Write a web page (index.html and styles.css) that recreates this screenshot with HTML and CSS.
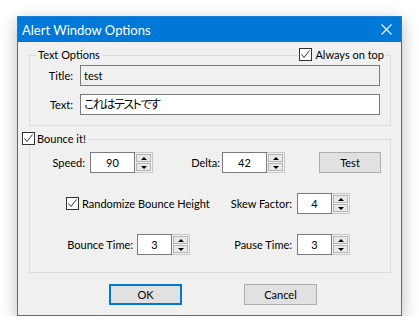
FILE: index.html
```html
<!DOCTYPE html>
<html lang="en">

<head>
  <meta charset="UTF-8">
  <meta name="viewport" content="width=device-width, initial-scale=1.0">
  <title>Alert Window Options</title>

  <link rel="stylesheet" href="styles.css">

</head>

<body>

  <div class="window">
    <div class="titlebar">
      <span class="title">Alert Window Options</span>
      <svg class="close" width="11" height="11" viewBox="0 0 11 11">
        <path d="M0.5 0.5 L10.5 10.5 M10.5 0.5 L0.5 10.5" stroke="#fff" stroke-width="1.1" fill="none" />
      </svg>
    </div>

    <div class="content">

      <!-- text options -->
      <div class="group text-group">
        <div class="group-head">
          <span class="legend">Text Options</span>
          <span class="check legend">
            <svg class="box" width="13" height="13" viewBox="0 0 13 13">
              <rect x="0.5" y="0.5" width="12" height="12" fill="#fff" stroke="#333" />
              <polyline points="2.5,6.5 5,9.5 10.5,2.5" fill="none" stroke="#333" stroke-width="1" />
            </svg>
            Always on top
          </span>
        </div>
        <div class="field-row">
          <span class="field-label">Title:</span>
          <div class="textbox readonly">test</div>
        </div>
        <div class="field-row">
          <span class="field-label">Text:</span>
          <div class="textbox jp">これはテストです</div>
        </div>
      </div>

      <!-- bounce -->
      <div class="group bounce-group">
        <div class="group-head">
          <span class="check legend bounce-check">
            <svg class="box" width="13" height="13" viewBox="0 0 13 13">
              <rect x="0.5" y="0.5" width="12" height="12" fill="#fff" stroke="#333" />
              <polyline points="2.5,6.5 5,9.5 10.5,2.5" fill="none" stroke="#333" stroke-width="1" />
            </svg>
            Bounce it!
          </span>
        </div>

        <div class="row">
          <span class="lbl lbl-speed">Speed:</span>
          <div class="spin wide">
            <div class="spin-value">90</div>
            <div class="spin-btns"><span class="up"></span><span class="down"></span></div>
          </div>
          <span class="lbl lbl-delta">Delta:</span>
          <div class="spin wide">
            <div class="spin-value">42</div>
            <div class="spin-btns"><span class="up"></span><span class="down"></span></div>
          </div>
          <button class="btn test-btn">Test</button>
        </div>

        <div class="row">
          <span class="check random-check">
            <svg class="box" width="13" height="13" viewBox="0 0 13 13">
              <rect x="0.5" y="0.5" width="12" height="12" fill="#fff" stroke="#333" />
              <polyline points="2.5,6.5 5,9.5 10.5,2.5" fill="none" stroke="#333" stroke-width="1" />
            </svg>
            Randomize Bounce Height
          </span>
          <span class="lbl lbl-skew">Skew Factor:</span>
          <div class="spin">
            <div class="spin-value">4</div>
            <div class="spin-btns"><span class="up"></span><span class="down"></span></div>
          </div>
        </div>

        <div class="row">
          <span class="lbl lbl-btime">Bounce Time:</span>
          <div class="spin">
            <div class="spin-value">3</div>
            <div class="spin-btns"><span class="up"></span><span class="down"></span></div>
          </div>
          <span class="lbl lbl-ptime">Pause Time:</span>
          <div class="spin">
            <div class="spin-value">3</div>
            <div class="spin-btns"><span class="up"></span><span class="down"></span></div>
          </div>
        </div>
      </div>

      <div class="buttons">
        <button class="btn default">OK</button>
        <button class="btn">Cancel</button>
      </div>

    </div>
  </div>

</body>

</html>
```

FILE: styles.css
```css
body {
  margin: 0;
  background-color: #fff;
  font-family: Lato, "Noto Sans CJK JP", sans-serif;
  font-size: 11px;
  color: #000;
}

/* window */
.window {
  box-sizing: border-box;
  margin: 16px 0 0 17px;
  width: 385px;
  height: 300px;
  border: 1px solid #1a7fd4;
  background-color: #f0f0f0;
  box-shadow: 0 5px 16px rgba(0, 0, 0, 0.28);
  display: flex;
  flex-direction: column;
}

.titlebar {
  height: 25px;
  background-color: #0078d7;
  display: flex;
  align-items: center;
  justify-content: space-between;
  padding: 0 9px 0 4px;
}

.title {
  color: #fff;
  font-size: 13px;
}

.content {
  padding: 0 10px 0 11px;
}

/* group boxes */
.group {
  border: 1px solid #dcdcdc;
}

.group-head {
  display: flex;
  justify-content: space-between;
  align-items: center;
  height: 15px;
  margin-top: -9px;
}

.legend {
  background-color: #f0f0f0;
  padding: 0 2px;
  line-height: 15px;
}

.text-group {
  margin-top: 13px;
  padding-bottom: 10px;
}

.text-group .group-head {
  margin-bottom: 3px;
  padding-left: 6px;
  padding-right: 4px;
}

.check {
  display: flex;
  align-items: center;
  gap: 3px;
  white-space: nowrap;
}

.field-row {
  display: flex;
  align-items: center;
  height: 21px;
  margin-bottom: 8px;
}

.field-row:last-child {
  margin-bottom: 0;
}

.field-label {
  width: 43px;
  margin-right: 7px;
  text-align: right;
}

.textbox {
  box-sizing: border-box;
  flex: 1;
  height: 21px;
  margin-right: 10px;
  padding-left: 3px;
  border: 1px solid #7a7a7a;
  background-color: #fff;
  line-height: 19px;
}

.textbox.readonly {
  background-color: #f0f0f0;
}

.jp {
  font-size: 12px;
  font-feature-settings: "palt";
  letter-spacing: -1.5px;
}

.bounce-group {
  margin-top: 13px;
  padding-bottom: 17px;
}

.bounce-check {
  margin-left: -8px;
  padding-left: 0;
  gap: 2px;
}

/* rows */
.row {
  display: flex;
  align-items: center;
  height: 21px;
  margin-top: 20px;
}

.bounce-group .group-head + .row {
  margin-top: 6px;
}

.lbl {
  flex-shrink: 0;
  text-align: right;
  white-space: nowrap;
}

.lbl-speed {
  width: 55px;
  margin-right: 5px;
}

.lbl-delta {
  width: 67px;
  margin-right: 2px;
}

.random-check {
  flex-shrink: 0;
  width: 150px;
  margin-left: 36px;
}

.lbl-skew {
  width: 76px;
  margin-right: 5px;
}

.lbl-btime {
  width: 103px;
  margin-right: 4px;
}

.lbl-ptime {
  width: 102px;
  margin-right: 5px;
}

/* spin boxes */
.spin {
  display: flex;
  flex-shrink: 0;
  height: 21px;
}

.spin-value {
  box-sizing: border-box;
  width: 35px;
  height: 21px;
  border: 1px solid #7a7a7a;
  background-color: #fff;
  text-align: center;
  line-height: 19px;
}

.spin.wide .spin-value {
  width: 45px;
}

.spin-btns {
  box-sizing: border-box;
  width: 18px;
  height: 21px;
  border: 1px solid #c8c8c8;
  border-left: none;
  padding: 1px;
  display: flex;
  flex-direction: column;
  gap: 1px;
}

.spin-btns span {
  flex: 1;
  border: 1px solid #b4b4b4;
  background-color: #e8e8e8;
  display: flex;
  align-items: center;
  justify-content: center;
}

.spin-btns .up::before {
  content: "";
  border-left: 3px solid transparent;
  border-right: 3px solid transparent;
  border-bottom: 3px solid #000;
}

.spin-btns .down::before {
  content: "";
  border-left: 3px solid transparent;
  border-right: 3px solid transparent;
  border-top: 3px solid #000;
}

/* buttons */
.btn {
  box-sizing: border-box;
  flex-shrink: 0;
  width: 73px;
  height: 21px;
  padding: 0;
  border: 1px solid #adadad;
  background-color: #e1e1e1;
  font-family: Lato, sans-serif;
  font-size: 11px;
  color: #000;
}

.btn.default {
  border: 2px solid #0078d7;
}

.test-btn {
  width: 62px;
  margin-left: 34px;
}

.buttons {
  display: flex;
  gap: 62px;
  margin-top: 11px;
  padding-left: 80px;
}
```
